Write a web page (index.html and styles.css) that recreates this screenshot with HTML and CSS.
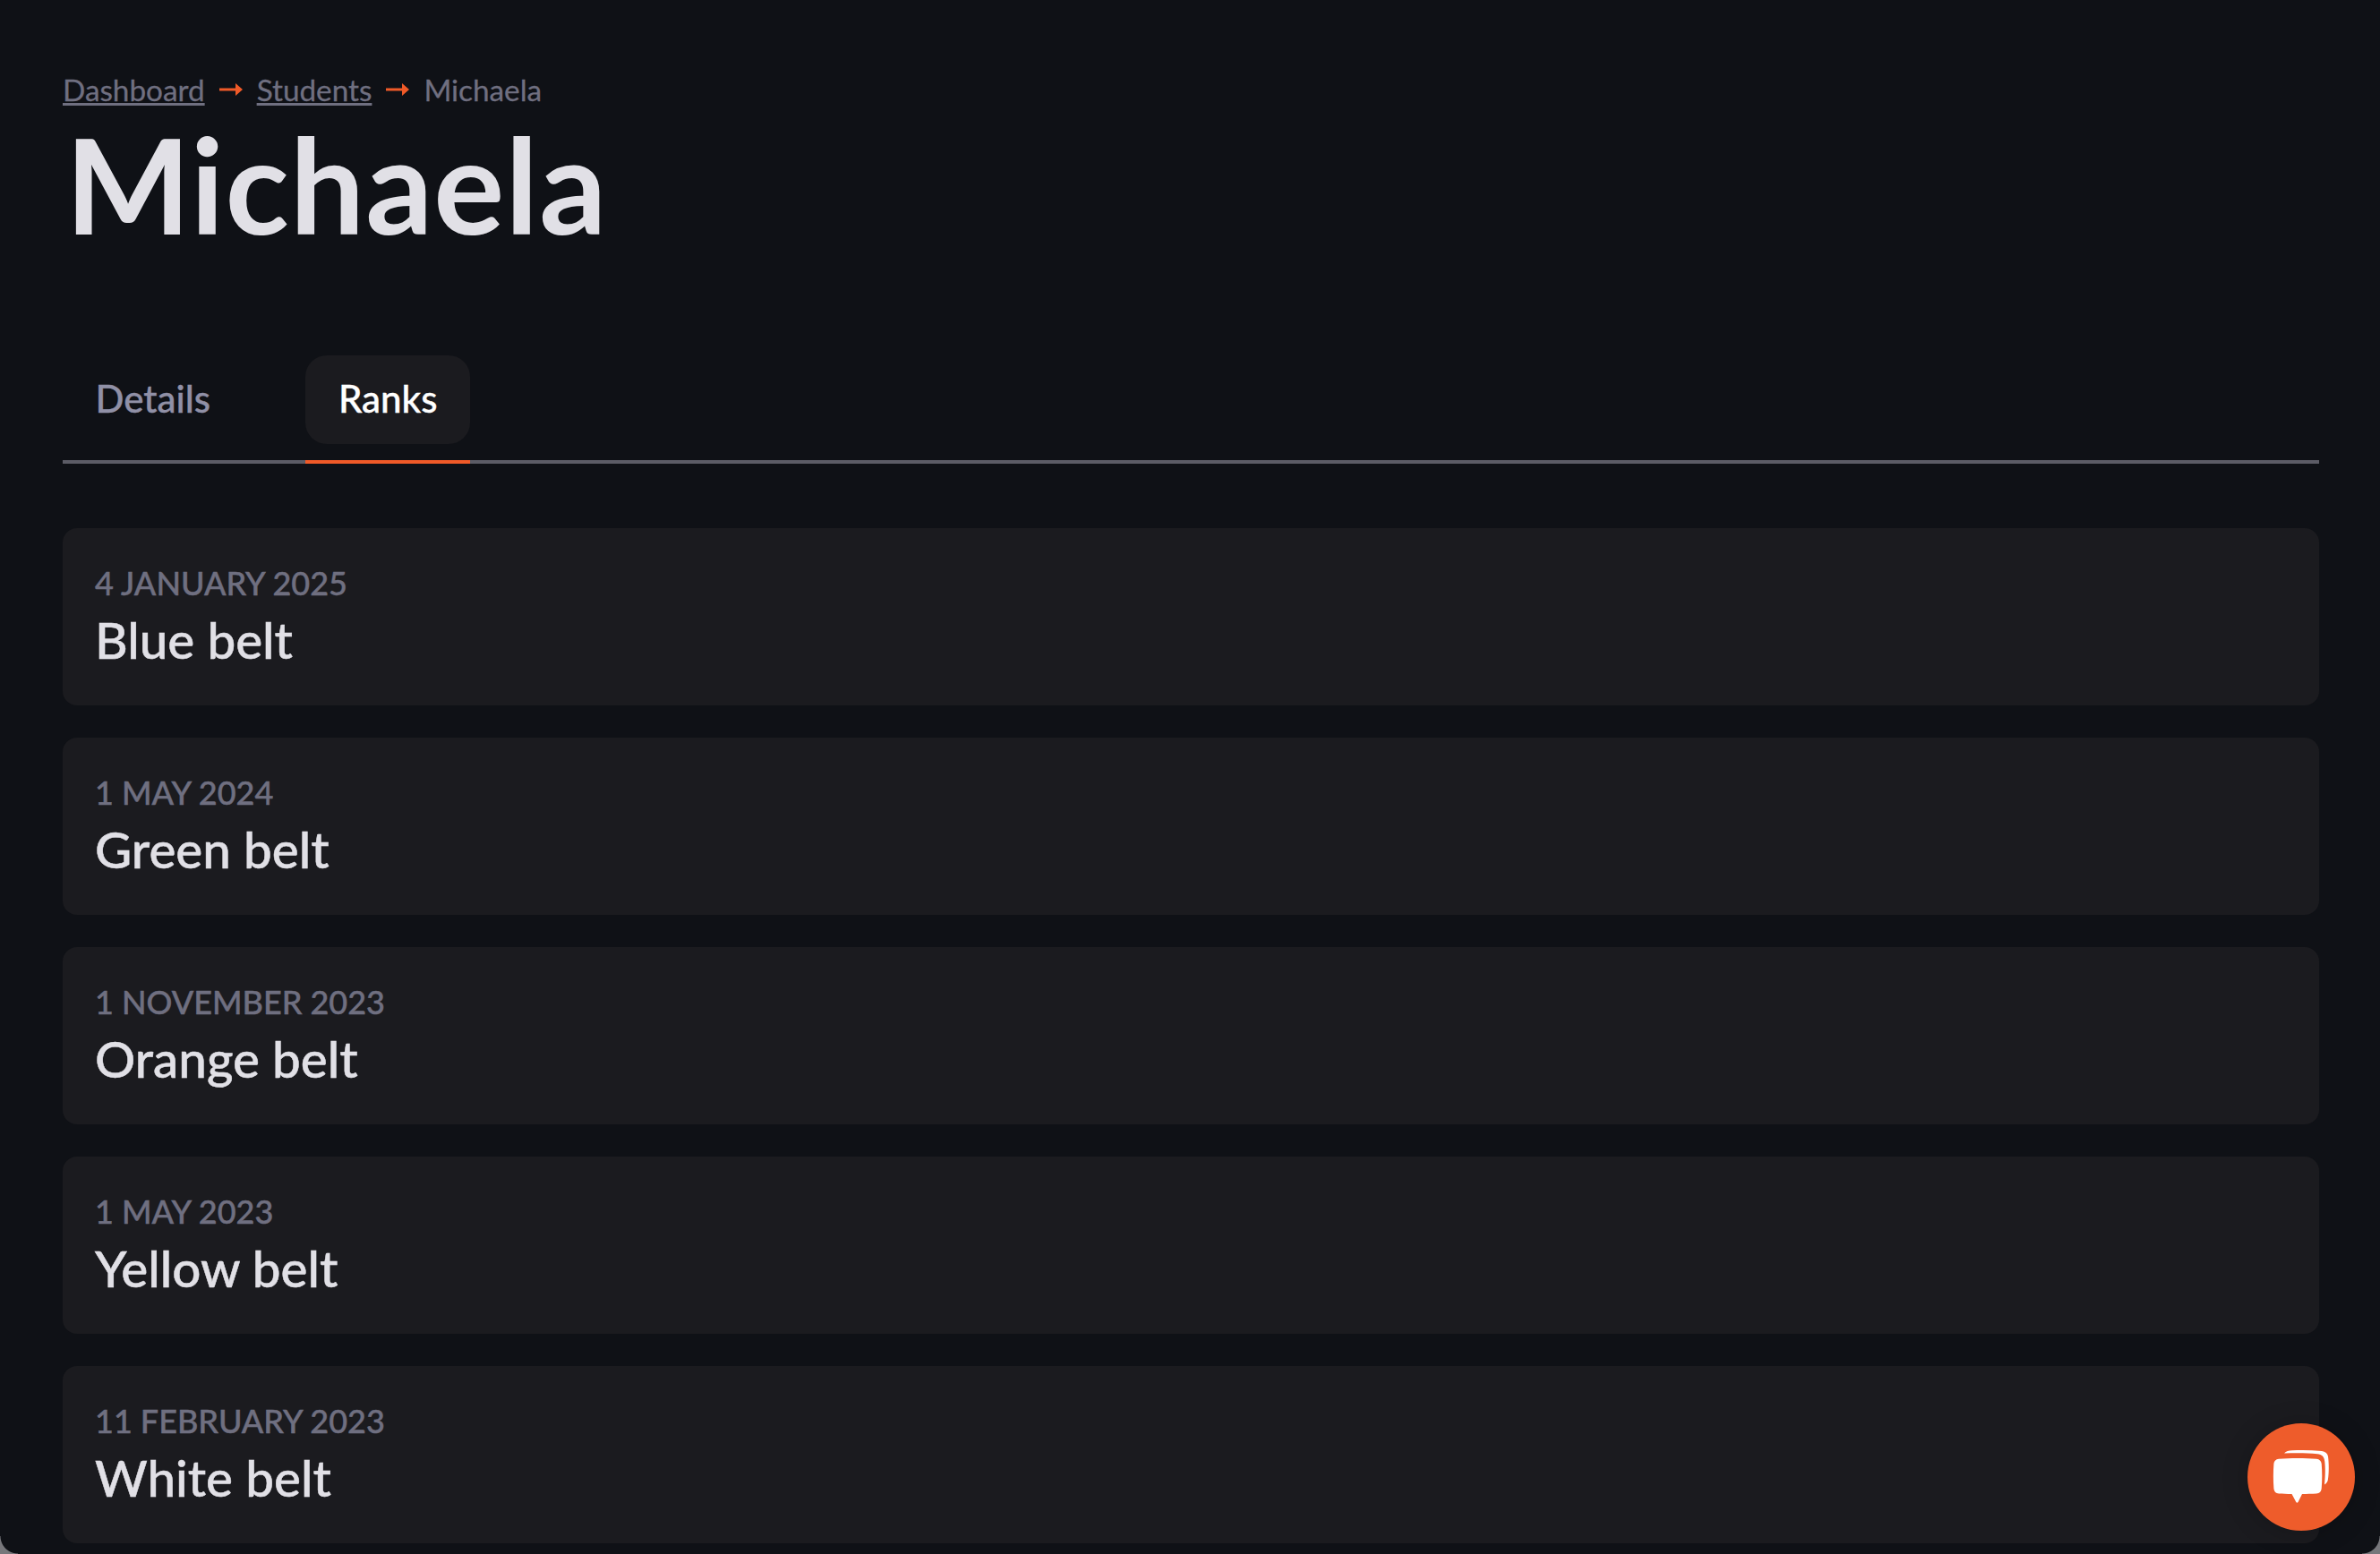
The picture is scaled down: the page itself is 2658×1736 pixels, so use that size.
FILE: index.html
```html
<!DOCTYPE html>
<html lang="en">
<head>
<meta charset="utf-8">
<title>Michaela</title>
<link rel="stylesheet" href="styles.css">
</head>
<body>
<main class="page">
  <nav class="crumbs">
    <a href="#" class="crumb-link">Dashboard</a>
    <svg class="crumb-arrow" viewBox="0 0 26 14"><path d="M0 5.500h18V0l8 7-8 7V8.500H0z"/></svg>
    <a href="#" class="crumb-link">Students</a>
    <svg class="crumb-arrow" viewBox="0 0 26 14"><path d="M0 5.500h18V0l8 7-8 7V8.500H0z"/></svg>
    <span>Michaela</span>
  </nav>
  <h1 class="title">Michaela</h1>
  <div class="tabs">
    <a href="#" class="tab"><span class="tab-label">Details</span></a>
    <a href="#" class="tab active"><span class="tab-label">Ranks</span></a>
  </div>
  <ul class="ranks">
    <li class="rank"><div class="date">4 January 2025</div><div class="belt">Blue belt</div></li>
    <li class="rank"><div class="date">1 May 2024</div><div class="belt">Green belt</div></li>
    <li class="rank"><div class="date">1 November 2023</div><div class="belt">Orange belt</div></li>
    <li class="rank"><div class="date">1 May 2023</div><div class="belt">Yellow belt</div></li>
    <li class="rank"><div class="date">11 February 2023</div><div class="belt">White belt</div></li>
  </ul>
</main>
<button class="chat" aria-label="Chat">
  <svg viewBox="0 0 120 120">
    <path fill="#fff" d="M41 33.500C43 31 46 30.500 50 30.300C60 29.800 72 30 83 31C87 31.500 89.500 33.500 90 37C91 45 91 55 90 62C89.800 65 88.500 67 86 68.500C87 58 87 50 86.300 43C85.800 37 83 35 78 34.300C67 33 54 33 41 33.500Z"/>
    <path fill="#fff" d="M35 39.800C48 38.800 64 38.800 77 39.800C80.500 40.200 82.300 42 82.700 45C83.500 54 83.500 64 82.700 73C82.300 76.500 80.500 78.300 77 78.600C72 79 66 79 61 79L56.500 88C55.800 89 55 89 54.300 88L49.500 79C44 79 39 79 35 78.600C31.500 78.300 29.800 76.500 29.400 73C28.700 64 28.700 54 29.400 45C29.800 42 31.500 40.200 35 39.800Z"/>
  </svg>
</button>
</body>
</html>
```
FILE: styles.css
```css
* { box-sizing: border-box; }
html, body { margin: 0; height: 100%; overflow: hidden; }
body {
  background: #0f1116;
  font-family: Lato, "Noto Sans", sans-serif;
  color: #e1e0e6;
}
body::before,
body::after {
  content: "";
  position: fixed;
  bottom: 0;
  width: 20px;
  height: 20px;
}
body::before {
  left: 0;
  background: radial-gradient(circle at 100% 0, transparent 19px, #77777b 20px);
}
body::after {
  right: 0;
  background: radial-gradient(circle at 0 0, transparent 19px, #77777b 20px);
}
.page { padding: 78px 68px 0 70px; }
.crumbs {
  display: flex;
  align-items: center;
  gap: 16px;
  height: 44px;
  font-size: 33.300px;
  color: #6f6f80;
  -webkit-text-stroke: .3px currentColor;
}
.crumb-link {
  color: inherit;
  text-decoration: underline;
  text-decoration-thickness: 3px;
  text-underline-offset: 2px;
}
.crumb-arrow { width: 26px; height: 14px; fill: #f05a28; flex: none; }
.title {
  margin: 3px 0 0 3px;
  font-size: 148px;
  font-weight: 700;
  letter-spacing: 1px;
  line-height: 160px;
  color: #e1e0e6;
}
.tabs {
  display: flex;
  gap: 70px;
  margin-top: 112px;
  border-bottom: 4px solid #5c5c66;
}
.tab {
  display: block;
  margin-bottom: -4px;
  padding-bottom: 18px;
  border-bottom: 4px solid transparent;
  font-size: 42px;
  font-weight: 500;
  color: #9090a6;
  text-decoration: none;
  -webkit-text-stroke: .4px currentColor;
}
.tab-label {
  display: block;
  height: 99px;
  padding: 0 36.500px;
  line-height: 97px;
  border-radius: 24px;
}
.active { color: #fff; border-bottom-color: #f05a28; }
.active .tab-label { background: #1b1b1f; }
.ranks {
  list-style: none;
  margin: 72px 0 0;
  padding: 0;
  display: flex;
  flex-direction: column;
  gap: 36px;
}
.rank {
  height: 198px;
  background: #1b1b1f;
  border-radius: 16px;
  padding: 39px 36px 0;
}
.date {
  font-size: 36px;
  font-weight: 500;
  line-height: 44px;
  color: #6f6f80;
  text-transform: uppercase;
  -webkit-text-stroke: .5px currentColor;
}
.belt {
  margin-top: 8px;
  font-size: 56.500px;
  line-height: 66px;
  font-weight: 500;
  color: #e1e0e6;
  -webkit-text-stroke: .5px currentColor;
}
.chat {
  position: fixed;
  left: 2510px;
  top: 1590px;
  width: 120px;
  height: 120px;
  padding: 0;
  border: 0;
  border-radius: 50%;
  background: #ee5c2b;
  box-shadow: 0 2px 30px rgba(0,0,0,.2);
}
.chat svg { display: block; width: 120px; height: 120px; }
```
